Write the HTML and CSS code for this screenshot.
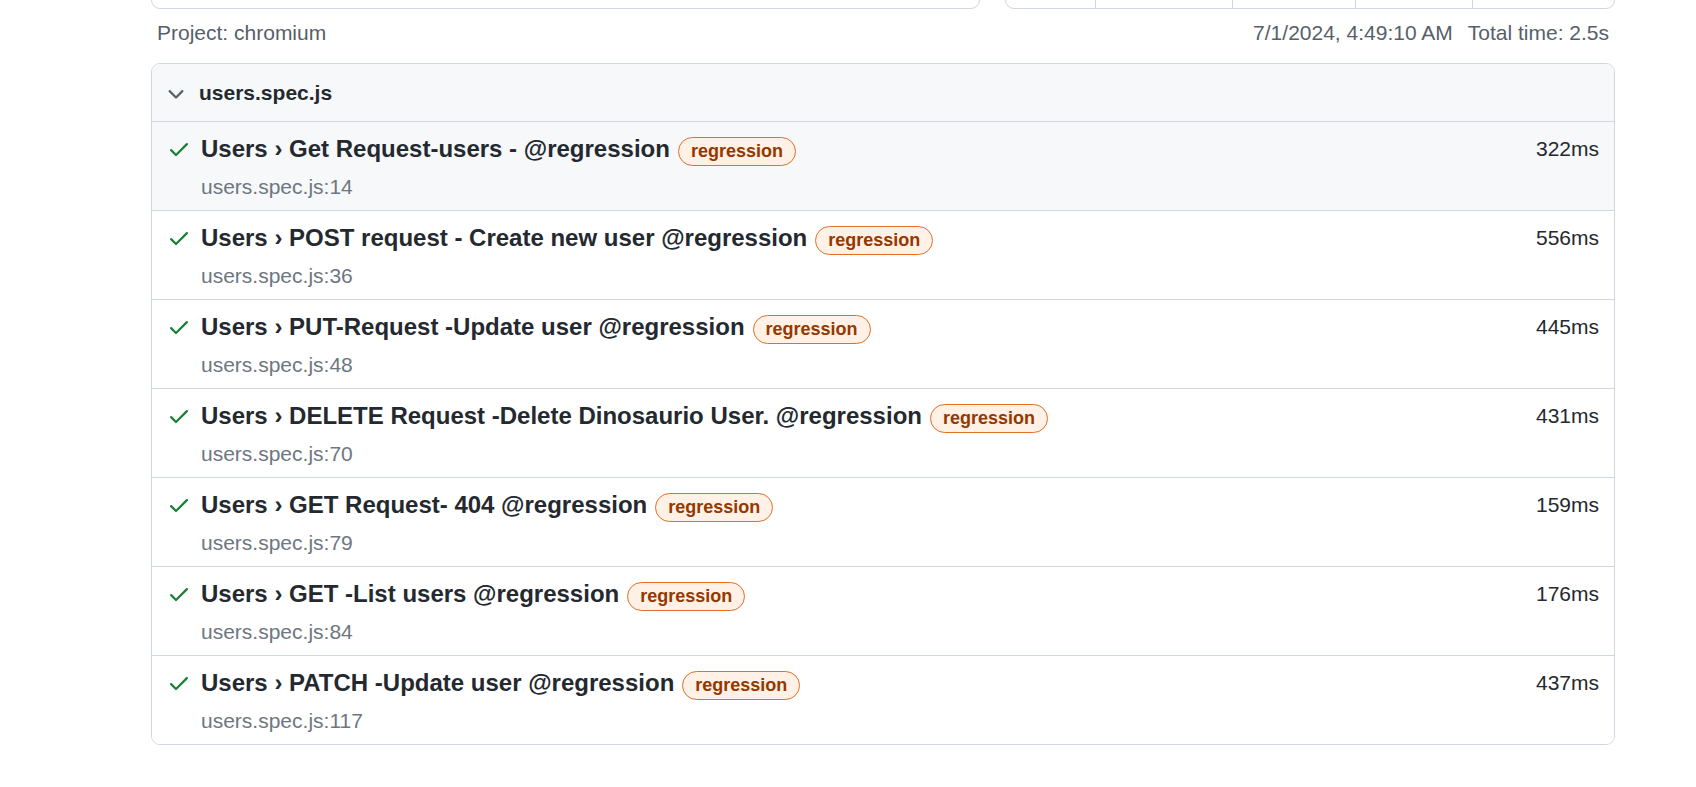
FILE: index.html
```html
<!DOCTYPE html>
<html lang="en">
<head>
<meta charset="utf-8">
<title>Playwright Test Report</title>
<link rel="stylesheet" href="styles.css">
</head>
<body>
<div class="report">
  <div class="top-bar">
    <div class="search"></div>
    <nav class="subnav">
      <span class="subnav-item item-all"></span>
      <span class="subnav-item item-passed"></span>
      <span class="subnav-item item-failed"></span>
      <span class="subnav-item item-flaky"></span>
      <span class="subnav-item item-skipped"></span>
    </nav>
  </div>
  <div class="meta">
    <div class="project">Project: chromium</div>
    <div class="times"><span class="date">7/1/2024, 4:49:10 AM</span><span>Total time: 2.5s</span></div>
  </div>
  <div class="chip">
    <div class="chip-header">
      <svg class="octicon chevron" viewBox="0 0 16 16" width="24" height="24"><path fill="currentColor" d="M12.78 6.22a.75.75 0 010 1.06l-4.25 4.25a.75.75 0 01-1.06 0L3.22 7.28a.75.75 0 011.06-1.060L8 9.94l3.72-3.72a.75.75 0 011.06 0z"/></svg>
      <span>users.spec.js</span>
    </div>
    <div class="chip-body">
      <div class="test hovered">
        <div class="test-line">
          <svg class="octicon check" viewBox="0 0 16 16" width="24" height="24"><path fill="currentColor" d="M13.78 4.22a.75.75 0 010 1.06l-7.25 7.25a.75.75 0 01-1.06 0L2.22 9.28a.75.75 0 011.06-1.06L6 10.94l6.72-6.72a.75.75 0 011.06 0z"/></svg>
          <span class="title">Users › Get Request-users - @regression</span>
          <span class="label">regression</span>
          <span class="duration">322ms</span>
        </div>
        <div class="details">users.spec.js:14</div>
      </div>
      <div class="test">
        <div class="test-line">
          <svg class="octicon check" viewBox="0 0 16 16" width="24" height="24"><path fill="currentColor" d="M13.78 4.22a.75.75 0 010 1.06l-7.25 7.25a.75.75 0 01-1.06 0L2.22 9.28a.75.75 0 011.06-1.06L6 10.94l6.72-6.72a.75.75 0 011.06 0z"/></svg>
          <span class="title">Users › POST request - Create new user @regression</span>
          <span class="label">regression</span>
          <span class="duration">556ms</span>
        </div>
        <div class="details">users.spec.js:36</div>
      </div>
      <div class="test">
        <div class="test-line">
          <svg class="octicon check" viewBox="0 0 16 16" width="24" height="24"><path fill="currentColor" d="M13.78 4.22a.75.75 0 010 1.06l-7.25 7.25a.75.75 0 01-1.06 0L2.22 9.28a.75.75 0 011.06-1.06L6 10.94l6.72-6.72a.75.75 0 011.06 0z"/></svg>
          <span class="title">Users › PUT-Request -Update user @regression</span>
          <span class="label">regression</span>
          <span class="duration">445ms</span>
        </div>
        <div class="details">users.spec.js:48</div>
      </div>
      <div class="test">
        <div class="test-line">
          <svg class="octicon check" viewBox="0 0 16 16" width="24" height="24"><path fill="currentColor" d="M13.78 4.22a.75.75 0 010 1.06l-7.25 7.25a.75.75 0 01-1.06 0L2.22 9.28a.75.75 0 011.06-1.06L6 10.94l6.72-6.72a.75.75 0 011.06 0z"/></svg>
          <span class="title">Users › DELETE Request -Delete Dinosaurio User. @regression</span>
          <span class="label">regression</span>
          <span class="duration">431ms</span>
        </div>
        <div class="details">users.spec.js:70</div>
      </div>
      <div class="test">
        <div class="test-line">
          <svg class="octicon check" viewBox="0 0 16 16" width="24" height="24"><path fill="currentColor" d="M13.78 4.22a.75.75 0 010 1.06l-7.25 7.25a.75.75 0 01-1.06 0L2.22 9.28a.75.75 0 011.06-1.06L6 10.94l6.72-6.72a.75.75 0 011.06 0z"/></svg>
          <span class="title">Users › GET Request- 404 @regression</span>
          <span class="label">regression</span>
          <span class="duration">159ms</span>
        </div>
        <div class="details">users.spec.js:79</div>
      </div>
      <div class="test">
        <div class="test-line">
          <svg class="octicon check" viewBox="0 0 16 16" width="24" height="24"><path fill="currentColor" d="M13.78 4.22a.75.75 0 010 1.06l-7.25 7.25a.75.75 0 01-1.06 0L2.22 9.28a.75.75 0 011.06-1.06L6 10.94l6.72-6.72a.75.75 0 011.06 0z"/></svg>
          <span class="title">Users › GET -List users @regression</span>
          <span class="label">regression</span>
          <span class="duration">176ms</span>
        </div>
        <div class="details">users.spec.js:84</div>
      </div>
      <div class="test">
        <div class="test-line">
          <svg class="octicon check" viewBox="0 0 16 16" width="24" height="24"><path fill="currentColor" d="M13.78 4.22a.75.75 0 010 1.06l-7.25 7.25a.75.75 0 01-1.06 0L2.22 9.28a.75.75 0 011.06-1.06L6 10.94l6.72-6.72a.75.75 0 011.06 0z"/></svg>
          <span class="title">Users › PATCH -Update user @regression</span>
          <span class="label">regression</span>
          <span class="duration">437ms</span>
        </div>
        <div class="details">users.spec.js:117</div>
      </div>
    </div>
  </div>
</div>
</body>
</html>
```

FILE: styles.css
```css
* { box-sizing: border-box; }

html, body {
  margin: 0;
  padding: 0;
  background: #ffffff;
}

body {
  font-family: "Liberation Sans", Arial, Helvetica, sans-serif;
  font-size: 21px;
  color: #24292f;
  overflow: hidden;
}

.report {
  margin-left: 151px;
  width: 1464px;
}

.top-bar {
  display: flex;
  gap: 25px;
  height: 45px;
  margin-top: -36px;
}

.search {
  flex: 0 0 829px;
  border: 1px solid #d0d7de;
  border-radius: 9px;
  background: #ffffff;
}

.subnav {
  flex: 1 1 auto;
  display: flex;
  border: 1px solid #d0d7de;
  border-radius: 9px;
  overflow: hidden;
}

.subnav-item {
  border-right: 1px solid #d0d7de;
  height: 100%;
}
.item-all { width: 90px; }
.item-passed { width: 137px; }
.item-failed { width: 123px; }
.item-flaky { width: 117px; }
.item-skipped { flex: 1; border-right: none; }

.meta {
  display: flex;
  justify-content: space-between;
  padding: 12px 6px 18px 6px;
  line-height: 24px;
  color: #57606a;
}

.date { margin-right: 15px; }

.chip {
  border: 1px solid #d0d7de;
  border-radius: 9px;
  overflow: hidden;
}

.chip-header {
  height: 58px;
  display: flex;
  align-items: center;
  padding: 0 12px;
  background: #f6f8fa;
  border-bottom: 1px solid #d0d7de;
  font-weight: bold;
  color: #24292f;
}

.octicon {
  flex: none;
  margin-right: 11px;
}

.chevron { color: #57606a; }
.check { color: #1a7f37; margin-right: 10px; }

.test {
  padding: 3px 15px;
  border-bottom: 1px solid #d0d7de;
  background: #ffffff;
}
.test:last-child { border-bottom: none; }
.test.hovered { background: #f6f8fa; }

.test-line {
  display: flex;
  align-items: center;
  height: 48px;
}

.title {
  font-size: 24px;
  font-weight: bold;
  color: #24292f;
  white-space: nowrap;
}

.label {
  flex: none;
  margin-left: 8px;
  margin-top: 4px;
  padding: 0 12px;
  font-size: 18px;
  line-height: 27px;
  font-weight: bold;
  border-radius: 2em;
  background: #fff1e5;
  color: #953800;
  border: 1px solid #e16f24;
}

.duration {
  margin-left: auto;
  color: #24292f;
}

.details {
  line-height: 24px;
  margin-top: 2px;
  padding: 0 0 8px 34px;
  color: #6e7781;
}
```
